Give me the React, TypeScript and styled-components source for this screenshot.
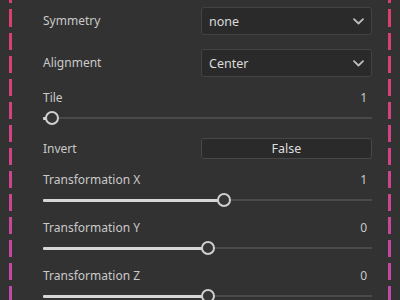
import React, { FC } from "react";
import styled, { createGlobalStyle } from "styled-components";

const GlobalStyle = createGlobalStyle`
  html, body {
    margin: 0;
    padding: 0;
    background: #323232;
  }
  body {
    font-family: "Noto Sans", "Open Sans", sans-serif;
    font-size: 12px;
    color: #cfcfcf;
  }
`;

const Page = styled.div`
  display: flex;
  align-items: flex-start;
  width: 400px;
  height: 300px;
  overflow: hidden;
  padding-left: 9px;
  box-sizing: border-box;
  background: #323232;
`;

const DashLine = styled.div`
  flex: 0 0 3px;
  height: 300px;
  background: linear-gradient(to bottom, #db3f6a 0%, #cf4488 55%, #c04aab 100%);
  -webkit-mask-image: repeating-linear-gradient(
    to bottom,
    #000 0 17px,
    transparent 17px 23px
  );
  mask-image: repeating-linear-gradient(
    to bottom,
    #000 0 17px,
    transparent 17px 23px
  );
  -webkit-mask-position: 0 10px;
  mask-position: 0 10px;
`;

const Panel = styled.div`
  flex: 0 0 376px;
  box-sizing: border-box;
  padding: 7px 16px 0 31px;
  display: flex;
  flex-direction: column;
  gap: 13px;

  & > * {
    flex-shrink: 0;
  }
`;

const FieldRow = styled.div<{ $h: number; $top?: number }>`
  display: grid;
  grid-template-columns: 158px 1fr;
  align-items: center;
  height: ${(p) => p.$h}px;
  margin-top: ${(p) => p.$top ?? 0}px;
`;

const Label = styled.span`
  color: #c9c9c9;
  line-height: 16px;
  white-space: nowrap;
`;

const SelectBox = styled.div`
  height: 100%;
  box-sizing: border-box;
  display: flex;
  align-items: center;
  justify-content: space-between;
  padding: 0 7px 0 7px;
  background: #2a2a2a;
  border: 1px solid #434343;
  border-radius: 3px;
  color: #dcdcdc;
  font-size: 12.5px;
`;

const ToggleButton = styled.div`
  height: 100%;
  box-sizing: border-box;
  display: flex;
  align-items: center;
  justify-content: center;
  background: #2a2a2a;
  border: 1px solid #474747;
  border-radius: 3px;
  color: #dedede;
  font-size: 12.5px;
`;

const SliderGroup = styled.div`
  display: flex;
  flex-direction: column;
  gap: 5px;
`;

const SliderHead = styled.div`
  display: flex;
  justify-content: space-between;
  align-items: center;
  height: 16px;
`;

const Value = styled.span`
  color: #c9c9c9;
  padding-right: 5px;
  line-height: 16px;
`;

const Track = styled.div`
  position: relative;
  height: 14px;
  &::before {
    content: "";
    position: absolute;
    left: 0;
    right: 0;
    top: 6px;
    height: 2px;
    background: #4a4a4a;
  }
`;

const Fill = styled.div`
  position: absolute;
  left: 0;
  top: 5.5px;
  height: 3px;
  background: #d6d6d6;
  border-radius: 1px;
`;

const Thumb = styled.div`
  position: absolute;
  top: 0;
  width: 14px;
  height: 14px;
  box-sizing: border-box;
  margin-left: -7px;
  border-radius: 50%;
  border: 2.5px solid #cfcfcf;
  background: #353535;
`;

const Chevron: FC = () => (
  <svg width="11" height="7" viewBox="0 0 11 7" fill="none">
    <path
      d="M1 1.2 L5.5 5.5 L10 1.2"
      stroke="#bdbdbd"
      strokeWidth="1.8"
      strokeLinecap="round"
      strokeLinejoin="round"
    />
  </svg>
);

const Select: FC<{ label: string; value: string; top?: number }> = ({
  label,
  value,
  top,
}) => (
  <FieldRow $h={28} $top={top}>
    <Label>{label}</Label>
    <SelectBox>
      <span>{value}</span>
      <Chevron />
    </SelectBox>
  </FieldRow>
);

type SliderProps = {
  label: string;
  value: number;
  min: number;
  max: number;
};

const Slider: FC<SliderProps> = ({ label, value, min, max }) => {
  const pct = ((value - min) / (max - min)) * 100;
  return (
    <SliderGroup>
      <SliderHead>
        <Label>{label}</Label>
        <Value>{value}</Value>
      </SliderHead>
      <Track>
        <Fill style={{ width: `${pct}%` }} />
        <Thumb style={{ left: `${pct}%` }} />
      </Track>
    </SliderGroup>
  );
};

const App: FC = () => {
  return (
    <>
      <GlobalStyle />
      <Page>
        <DashLine />
        <Panel>
          <Select label="Symmetry" value="none" />
          <Select label="Alignment" value="Center" top={1} />
          <Slider label="Tile" value={1} min={0.75} max={10} />
          <FieldRow $h={21}>
            <Label>Invert</Label>
            <ToggleButton>False</ToggleButton>
          </FieldRow>
          <Slider label="Transformation X" value={1} min={-10} max={10} />
          <Slider label="Transformation Y" value={0} min={-10} max={10} />
          <Slider label="Transformation Z" value={0} min={-10} max={10} />
        </Panel>
        <DashLine />
      </Page>
    </>
  );
};

export default App;
